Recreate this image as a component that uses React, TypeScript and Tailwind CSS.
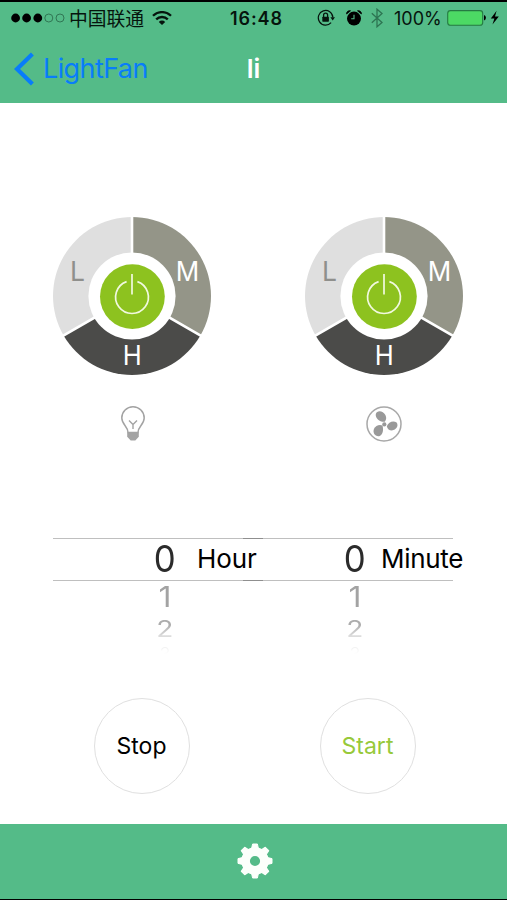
import { useState } from 'react'

type DialProps = {
  label: string
}

/** Three-speed ring (L / M / H) with the power button in the middle. */
function Dial({ label }: DialProps) {
  const [on, setOn] = useState(false)

  return (
    <svg
      viewBox="-80 -80 160 160"
      className="block h-40 w-40 cursor-pointer"
      role="button"
      aria-label={label}
      aria-pressed={on}
      onClick={() => setOn(!on)}
    >
      <path d="M0 0V-79A79 79 0 0 0 -68.4 39.5Z" fill="#dfdfdf" />
      <path d="M0 0V-79A79 79 0 0 1 68.4 39.5Z" fill="#949588" />
      <path d="M0 0L68.4 39.5A79 79 0 0 1 -68.4 39.5Z" fill="#4b4b49" />
      <path d="M0 0V-80M0 0L70 40.4M0 0L-70 40.4" stroke="#fff" strokeWidth="2.6" />
      <circle r="43.6" fill="#fff" />
      <circle cx="0.4" cy="0.6" r="32.4" fill="#8dc21f" />
      <path
        d="M-5.4 -14.4A16.4 16.4 0 1 0 5.4 -14.4M0 -22V-1.6"
        fill="none"
        stroke="#f1f9df"
        strokeWidth="1.7"
      />
      <g fontFamily="Inter, sans-serif" fontSize="26.5" textAnchor="middle">
        <text x="-54.5" y="-15" fill="#8f8f8c">L</text>
        <text x="55.4" y="-15" fill="#fff" textLength="23.5" lengthAdjust="spacingAndGlyphs">M</text>
        <text x="0.2" y="69.3" fill="#fff" textLength="19" lengthAdjust="spacingAndGlyphs">H</text>
      </g>
    </svg>
  )
}

function BulbIcon() {
  return (
    <svg viewBox="0 0 26 36" className="block h-9 w-[26px]" fill="none" stroke="#a3a3a3" strokeWidth="1.5">
      <path d="M8 26.5C8 20.5 1.8 18.5 1.8 12A11.2 11.2 0 0 1 24.2 12C24.2 18.5 18 20.5 18 26.5Z" />
      <path d="M9 14.5L13 18.5L17 14.5M13 18.5V23" strokeWidth="1.4" />
      <path d="M7.2 26.2H18.8V30.8L15.3 34.6H10.7L7.2 30.8Z" fill="#a3a3a3" stroke="none" />
    </svg>
  )
}

function FanIcon() {
  return (
    <svg viewBox="-18 -18 36 36" className="block h-9 w-9" fill="#999">
      <circle r="17" fill="none" stroke="#a8a8a8" strokeWidth="1.5" />
      <path d="M0.8 -2.2C-3.8 -1.6 -9 -5.6 -8.2 -10C-7 -14.4 -0.8 -13.4 1.4 -9C2.8 -6.2 2.2 -4 0.8 -2.2Z" />
      <path d="M2.8 2.2C4.4 -2 9.4 -4 12.6 -1.4C15 1.8 12.2 6 7.8 6.6C5.2 6.6 3.4 5 2.8 2.2Z" />
      <path d="M-1.6 1.4C-0.2 5.4 -1 10.8 -4.8 12.2C-9 12.8 -11.6 8.8 -10 4.8C-8.4 1.6 -4.8 0 -1.6 1.4Z" />
      <circle cx="0.3" cy="0.4" r="2.1" />
    </svg>
  )
}

type WheelProps = {
  unit: string
  unitClass: string
}

function Wheel({ unit, unitClass }: WheelProps) {
  return (
    <div className="w-[210px] text-center">
      <div className="flex h-[43px] items-center border-y border-black/25 pl-[94px]">
        <span className="w-9 shrink-0 pb-px text-[37px] leading-none text-[#2b2b2b]">
          <span className="inline-block scale-x-[.94]">0</span>
        </span>
        <span className={`whitespace-nowrap text-[26px] leading-8 text-black ${unitClass}`}>{unit}</span>
      </div>
      <div className="ml-[94px] w-9">
        <div className="h-8 text-[29px] leading-8 text-[#a3a3a3]">
          <span className="inline-block scale-x-[1.1]">1</span>
        </div>
        <div className="h-8">
          <span className="inline-block origin-center scale-x-[1.08] scale-y-[.86] bg-linear-to-b from-[#adadad] from-35% to-[#dcdcdc] to-75% bg-clip-text text-[26px] leading-8 text-transparent">
            2
          </span>
        </div>
        <div className="h-5 bg-linear-to-b from-[#f1f1f1] from-10% to-white to-45% bg-clip-text text-[18px] font-light leading-5 text-transparent">
          3
        </div>
      </div>
    </div>
  )
}

function StatusBar() {
  return (
    <div className="flex h-8 items-center pl-[11px] text-[17.5px] text-[#06140d]">
      <svg viewBox="0 0 54 10" className="h-[10px] w-[54px] shrink-0">
        <circle cx="4.6" cy="5" r="4.4" />
        <circle cx="15.6" cy="5" r="4.4" />
        <circle cx="26.8" cy="5" r="4.4" />
        <circle cx="37.8" cy="5" r="4" fill="none" stroke="#2c6e4e" strokeWidth=".9" />
        <circle cx="49" cy="5" r="4" fill="none" stroke="#2c6e4e" strokeWidth=".9" />
      </svg>
      <span className="ml-1 w-[76px] shrink-0 whitespace-nowrap font-['Noto_Sans_CJK_SC',sans-serif] text-[18.8px] leading-none">
        中国联通
      </span>
      <svg viewBox="0 0 20 15" className="ml-[7px] h-[15px] w-5 shrink-0" fill="none" stroke="#06140d" strokeWidth="2.3">
        <path d="M1 4.8A12.8 12.8 0 0 1 19 4.8M4.2 8.4A8.2 8.2 0 0 1 15.8 8.4" />
        <path d="M10 14L6.8 10.9A4.5 4.5 0 0 1 13.2 10.9Z" fill="#06140d" stroke="none" />
      </svg>
      <span className="ml-[58px] w-[54px] shrink-0 whitespace-nowrap text-[18px] font-semibold tracking-[0.9px]">16:48</span>
      <svg viewBox="0 0 18 18" className="ml-[33px] h-[18px] w-[18px] shrink-0" fill="none" stroke="#06140d">
        <path d="M14.1 13.6A7.3 7.3 0 1 1 15.9 8.4" strokeWidth="1.2" />
        <path d="M13.4 8.2H18L15.7 11.6Z" fill="#06140d" stroke="none" />
        <rect x="5.3" y="7.7" width="6.6" height="5" rx=".6" fill="#06140d" stroke="none" />
        <path d="M6.6 8V6.2A2 2 0 0 1 10.6 6.2V8" strokeWidth="1.3" />
      </svg>
      <svg viewBox="0 0 16 16" className="ml-[11px] h-4 w-4 shrink-0" fill="#000">
        <circle cx="8" cy="8.6" r="7" />
        <path d="M.6 4A3 3 0 0 1 4.5 .8ZM15.4 4A3 3 0 0 0 11.5 .8Z" stroke="#000" strokeWidth=".8" />
        <path d="M8 4.8V8.8H5.2" fill="none" stroke="#54bb88" strokeWidth="1.1" />
      </svg>
      <svg viewBox="0 0 12 20" className="ml-[9px] h-5 w-3 shrink-0" fill="none" stroke="#2d7452" strokeWidth="1.3">
        <path d="M.8 5.2L11 14.4L6 18.8V1.2L11 5.6L.8 14.8" />
      </svg>
      <span className="ml-[11px] w-12 shrink-0 text-[18px]">100%</span>
      <svg viewBox="0 0 54 16" className="ml-[5px] h-4 w-[54px] shrink-0">
        <rect x=".7" y=".6" width="35" height="14.6" rx="2.8" fill="#4cd964" stroke="#257a42" strokeWidth="1.1" />
        <path d="M37 5A3 3 0 0 1 37 10.6Z" />
        <path d="M49.6 .8L43.8 8.6H47.4L45.5 14.4L51.8 6.4H48Z" />
      </svg>
    </div>
  )
}

export default function App() {
  return (
    <div className="flex h-[900px] w-[507px] flex-col overflow-hidden bg-white font-['Inter','Noto_Sans_CJK_SC',sans-serif]">
      <header className="h-[102.5px] shrink-0 border-t-2 border-black bg-[#54bb88]">
        <StatusBar />
        <nav className="grid grid-cols-[1fr_auto_1fr] items-center pt-[14px]">
          <button type="button" className="flex items-center pl-[14px] text-[27px] leading-10 text-[#087dfa]">
            <svg viewBox="0 0 20 34" className="h-[34px] w-5" fill="none" stroke="#087dfa" strokeWidth="4.2">
              <path d="M18.4 2L3 17L18.4 32" />
            </svg>
            <span className="ml-[9px] pt-px tracking-[-0.6px]">LightFan</span>
          </button>
          <h1 className="text-[26px] font-semibold leading-10 text-white">li</h1>
        </nav>
      </header>

      <main className="flex-1">
        <div className="flex gap-[91.5px] pl-[52.3px] pt-[113px]">
          <Dial label="Light" />
          <Dial label="Fan" />
        </div>
        <div className="mt-[30px] flex gap-[220px] pl-[120px]">
          <BulbIcon />
          <FanIcon />
        </div>

        <div className="mt-[96px] flex pl-[53px]">
          <Wheel unit="Hour" unitClass="ml-[14px] tracking-[-0.1px]" />
          <div className="-ml-5">
            <Wheel unit="Minute" unitClass="ml-[8px] tracking-[-0.3px]" />
          </div>
        </div>

        <div className="mt-[33px] flex gap-[130px] pl-[93.5px] text-[23px]">
          <button type="button" className="size-24 rounded-full border-[1.5px] border-[#e0e0e0] pt-[2px] text-black">
            Stop
          </button>
          <button type="button" className="size-24 rounded-full border-[1.5px] border-[#e0e0e0] pt-[2px] text-[#97c93a]">
            Start
          </button>
        </div>
      </main>

      <footer className="flex h-[76.5px] shrink-0 items-center justify-center border-b-[1.5px] border-black bg-[#54bb88] pl-0.5">
        <svg viewBox="-18 -18 36 36" className="h-9 w-9" fill="#fcfffb">
          <circle r="9.4" fill="none" stroke="#fcfffb" strokeWidth="8.6" />
          {[0, 45, 90, 135, 180, 225, 270, 315].map((deg) => (
            <path key={deg} d="M-3.4 -12.5L-2.4 -17H2.4L3.4 -12.5Z" strokeLinejoin="round" stroke="#fcfffb" transform={`rotate(${deg})`} />
          ))}
        </svg>
      </footer>
    </div>
  )
}
